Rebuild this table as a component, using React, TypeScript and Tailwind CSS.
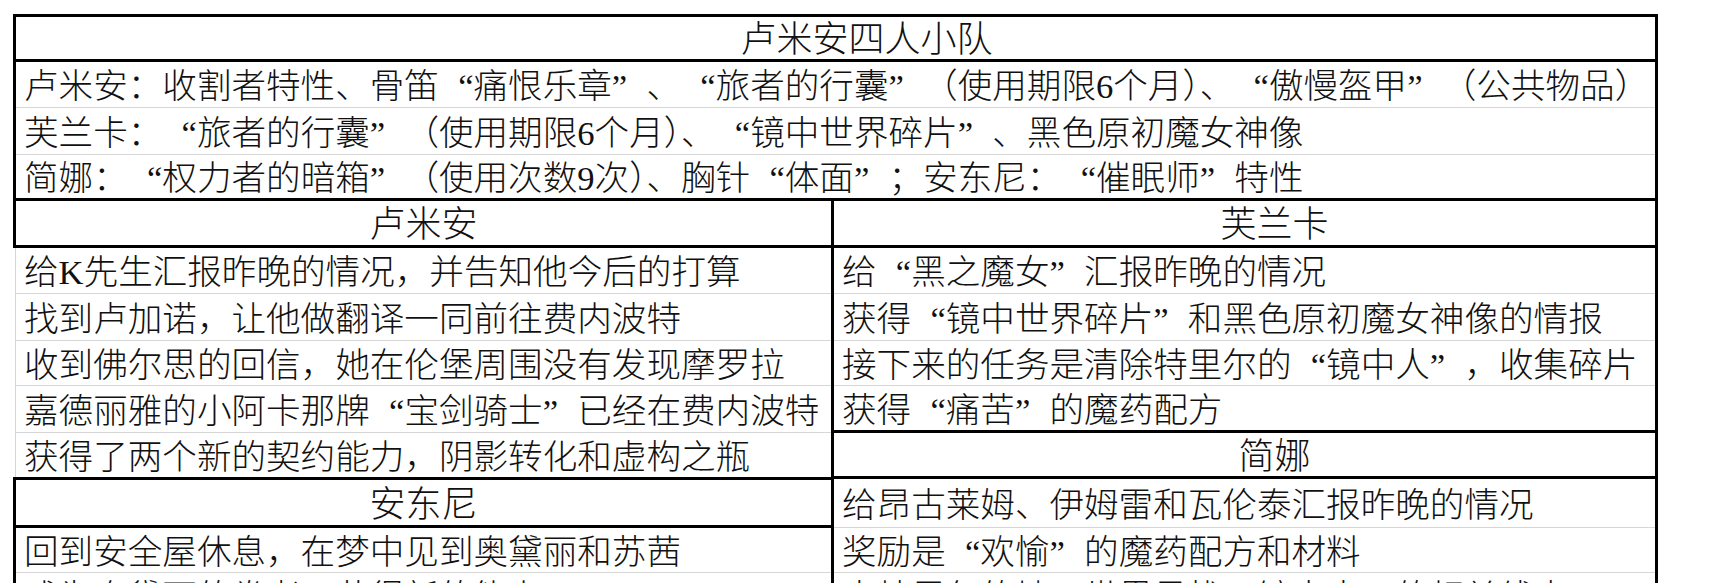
import React from "react";

function Q({ s }: { s: string }) {
  const out: React.ReactNode[] = [];
  let buf = "";
  let k = 0;
  for (const ch of s) {
    if (ch === "“" || ch === "”") {
      if (buf) out.push(<span key={k++}>{buf}</span>);
      buf = "";
      out.push(
        <span
          key={k++}
          className={
            ch === "“"
              ? "inline-block w-[1em] text-right"
              : "inline-block w-[1em] text-left"
          }
        >
          {ch}
        </span>
      );
    } else buf += ch;
  }
  if (buf) out.push(<span key={k++}>{buf}</span>);
  return <>{out}</>;
}

function Cell({
  h,
  text,
  line = true,
}: {
  h: string;
  text: string;
  line?: boolean;
}) {
  return (
    <div
      className={`${h} flex items-center pt-[4px] pl-[8px] whitespace-nowrap overflow-hidden ${
        line ? "border-b border-[#d6d6d6]" : ""
      }`}
    >
      <Q s={text} />
    </div>
  );
}

export default function App() {
  return (
    <div className="w-[1731px] h-[583px] overflow-hidden bg-white text-[#111111] font-['Liberation_Serif','Noto_Sans_CJK_SC',serif] font-light text-[34.6px] leading-none">
      <div className="ml-[13px] mt-[14px] w-[1645px]">
        <div className="border-[3px] border-black">
          <div className="h-[45px] flex items-center justify-center pt-[4px] pl-[62px] text-[36px] border-b-[3px] border-black">
            卢米安四人小队
          </div>
          <Cell
            h="h-[46px]"
            text="卢米安：收割者特性、骨笛“痛恨乐章”、“旅者的行囊”（使用期限6个月）、“傲慢盔甲”（公共物品）"
          />
          <Cell
            h="h-[47px]"
            text="芙兰卡：“旅者的行囊”（使用期限6个月）、“镜中世界碎片”、黑色原初魔女神像"
          />
          <Cell
            h="h-[43px]"
            line={false}
            text="简娜：“权力者的暗箱”（使用次数9次）、胸针“体面”；安东尼：“催眠师”特性"
          />
        </div>
        <div className="flex">
          <div className="w-[821px] border-r-[3px] border-black flex flex-col">
            <div className="h-[47px] border-l-[3px] border-b-[3px] border-black flex items-center justify-center pt-[4px] text-[36px]">
              卢米安
            </div>
            <div className="ml-[2px] border-l border-[#d6d6d6]">
              <Cell h="h-[46px]" text="给K先生汇报昨晚的情况，并告知他今后的打算" />
              <Cell h="h-[47px]" text="找到卢加诺，让他做翻译一同前往费内波特" />
              <Cell h="h-[45px]" text="收到佛尔思的回信，她在伦堡周围没有发现摩罗拉" />
              <Cell h="h-[47px]" text="嘉德丽雅的小阿卡那牌“宝剑骑士”已经在费内波特" />
              <Cell
                h="h-[44px]"
                line={false}
                text="获得了两个新的契约能力，阴影转化和虚构之瓶"
              />
            </div>
            <div className="h-[51px] border-l-[3px] border-y-[3px] border-black flex items-center justify-center pt-[4px] text-[36px]">
              安东尼
            </div>
            <div className="border-l-[3px] border-black">
              <Cell h="h-[45px]" text="回到安全屋休息，在梦中见到奥黛丽和苏茜" />
              <Cell h="h-[46px]" text="成为奥黛丽的眷者，获得新的能力" />
            </div>
          </div>
          <div className="flex-1 border-r-[3px] border-black flex flex-col">
            <div className="h-[47px] border-b-[3px] border-black flex items-center justify-center pt-[4px] pl-[60px] text-[36px]">
              芙兰卡
            </div>
            <Cell h="h-[46px]" text="给“黑之魔女”汇报昨晚的情况" />
            <Cell h="h-[47px]" text="获得“镜中世界碎片”和黑色原初魔女神像的情报" />
            <Cell h="h-[45px]" text="接下来的任务是清除特里尔的“镜中人”，收集碎片" />
            <Cell h="h-[44px]" line={false} text="获得“痛苦”的魔药配方" />
            <div className="h-[49px] border-y-[3px] border-black flex items-center justify-center pt-[4px] pl-[60px] text-[36px]">
              简娜
            </div>
            <Cell h="h-[49px]" text="给昂古莱姆、伊姆雷和瓦伦泰汇报昨晚的情况" />
            <Cell h="h-[45px]" text="奖励是“欢愉”的魔药配方和材料" />
            <Cell h="h-[46px]" text="去特里尔的地下世界寻找“镜中人”的相关线索" />
          </div>
        </div>
      </div>
    </div>
  );
}
